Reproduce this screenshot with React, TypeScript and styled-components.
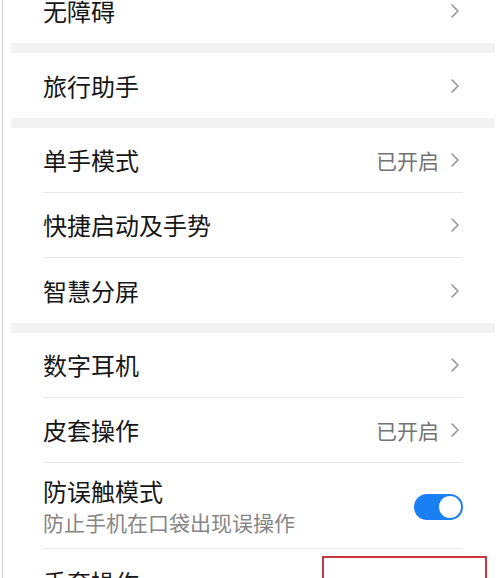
import React from "react";
import styled, { createGlobalStyle } from "styled-components";

const GlobalStyle = createGlobalStyle`
  html, body {
    margin: 0;
    padding: 0;
    background: #ffffff;
    overflow: hidden;
  }
  body {
    font-family: "Noto Sans CJK SC", "Noto Sans", sans-serif;
  }
`;

type Item = {
  title: string;
  subtitle?: string;
  value?: string;
  toggle?: boolean;
  highlight?: boolean;
};

const groups: Item[][] = [
  [{ title: "无障碍" }],
  [{ title: "旅行助手" }],
  [
    { title: "单手模式", value: "已开启" },
    { title: "快捷启动及手势" },
    { title: "智慧分屏" },
  ],
  [
    { title: "数字耳机" },
    { title: "皮套操作", value: "已开启" },
    {
      title: "防误触模式",
      subtitle: "防止手机在口袋出现误操作",
      toggle: true,
    },
    { title: "手套操作", highlight: true },
  ],
];

const Chevron = () => (
  <svg width="10" height="16" viewBox="0 0 10 16" fill="none">
    <path
      d="M2 2 L8 8 L2 14"
      stroke="#979797"
      strokeWidth="1.6"
      strokeLinecap="round"
      strokeLinejoin="round"
    />
  </svg>
);

const App: React.FC = () => {
  return (
    <>
      <GlobalStyle />
      <Frame>
        <Scroller>
          {groups.map((group, gi) => (
            <React.Fragment key={gi}>
              {gi > 0 && <GroupGap />}
              <Group>
                {group.map((item, i) => (
                  <Row key={item.title} tall={!!item.subtitle}>
                    <Inner last={i === group.length - 1}>
                      <Texts>
                        <Title>{item.title}</Title>
                        {item.subtitle && <Subtitle>{item.subtitle}</Subtitle>}
                      </Texts>
                      {item.toggle ? (
                        <Switch>
                          <Knob />
                        </Switch>
                      ) : (
                        !item.highlight && (
                          <Trailing>
                            {item.value && <Value>{item.value}</Value>}
                            <Chevron />
                          </Trailing>
                        )
                      )}
                    </Inner>
                    {item.highlight && <Marker />}
                  </Row>
                ))}
              </Group>
            </React.Fragment>
          ))}
        </Scroller>
      </Frame>
    </>
  );
};

export default App;

const Frame = styled.div`
  height: 578px;
  margin-left: 2px;
  border-left: 1px solid #cfcfcf;
  padding: 0 5px 0 8px;
  overflow: hidden;
  background: #ffffff;
`;

const Scroller = styled.div`
  margin-top: -22px;
`;

const Group = styled.div`
  background: #ffffff;
`;

const GroupGap = styled.div`
  height: 10px;
  background: #f2f2f2;
`;

const Row = styled.div<{ tall?: boolean }>`
  position: relative;
  height: ${(p) => (p.tall ? 86 : 65)}px;
  padding: 0 32px;
`;

const Inner = styled.div<{ last?: boolean }>`
  height: 100%;
  box-sizing: border-box;
  display: flex;
  align-items: center;
  justify-content: space-between;
  border-bottom: ${(p) => (p.last ? "none" : "1px solid #e8e8e8")};
`;

const Texts = styled.div`
  display: flex;
  flex-direction: column;
  gap: 4px;
`;

const Title = styled.div`
  font-size: 24px;
  line-height: 28px;
  color: #161616;
`;

const Subtitle = styled.div`
  font-size: 21px;
  line-height: 26px;
  color: #868686;
`;

const Trailing = styled.div`
  display: flex;
  align-items: center;
  gap: 11px;
  margin-right: 3px;
`;

const Value = styled.span`
  font-size: 21px;
  color: #737373;
`;

const Switch = styled.div`
  width: 49px;
  height: 26px;
  border-radius: 13px;
  background: #1a7ff2;
  display: flex;
  align-items: center;
  justify-content: flex-end;
  padding: 0 2px;
  box-sizing: border-box;
  margin-top: 2px;
`;

const Knob = styled.div`
  width: 22px;
  height: 22px;
  border-radius: 50%;
  background: #ffffff;
`;

const Marker = styled.div`
  position: absolute;
  left: 311px;
  right: 8px;
  top: 7px;
  height: 80px;
  border: 2px solid #c9363f;
`;
